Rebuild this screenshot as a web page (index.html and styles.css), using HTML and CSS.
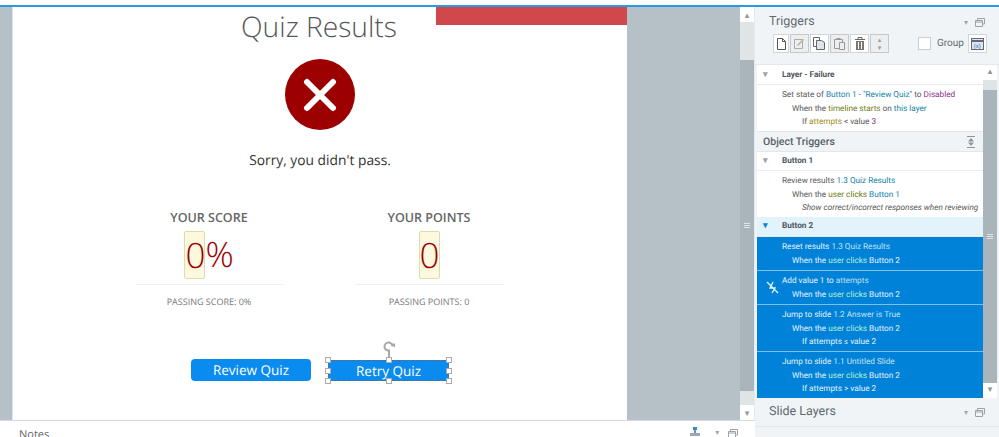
FILE: index.html
```html
<!DOCTYPE html>
<html lang="en">
<head>
  <meta charset="UTF-8">
  <title>Quiz Results</title>
  <link rel="stylesheet" href="styles.css">
</head>
<body>
  <div class="topline"></div>
  <div class="app">
    <div class="left">
      <div class="stage">
        <div class="slide">
          <div class="red-bar"></div>
          <h1 class="title">Quiz Results</h1>
          <div class="fail-icon">
            <svg width="34" height="34" viewBox="0 0 34 34"><path d="M4 4L30 30M30 4L4 30" stroke="#fff" stroke-width="6" stroke-linecap="round"/></svg>
          </div>
          <p class="sorry">Sorry, you didn't pass.</p>
          <div class="scores">
            <div class="score">
              <div class="score-label">YOUR SCORE</div>
              <div class="score-value"><span class="var">0</span>%</div>
              <div class="score-pass">PASSING SCORE: 0%</div>
            </div>
            <div class="score">
              <div class="score-label">YOUR POINTS</div>
              <div class="score-value"><span class="var">0</span></div>
              <div class="score-pass">PASSING POINTS: 0</div>
            </div>
          </div>
          <div class="buttons">
            <div class="btn">Review Quiz</div>
            <div class="btn selected">Retry Quiz
              <svg class="rotate" width="14" height="18" viewBox="0 0 14 18"><path d="M10.5 6.5A4 4 0 1 0 7 10.5V18" fill="none" stroke="#a9a9a9" stroke-width="2"/><path d="M8 3.5h5v4z" fill="#a9a9a9"/></svg>
              <i class="handle tl"></i><i class="handle tc"></i><i class="handle tr"></i>
              <i class="handle ml"></i><i class="handle mr"></i>
              <i class="handle bl"></i><i class="handle bc"></i><i class="handle br"></i>
            </div>
          </div>
        </div>
        <div class="gutter"></div>
        <div class="vscroll outer">
          <div class="arrow">&#9652;</div>
          <div class="track"></div>
          <div class="thumb"><span class="grip"></span></div>
          <div class="track short"></div>
          <div class="arrow">&#9662;</div>
        </div>
      </div>
      <div class="notes">
        <span class="notes-title">Notes</span>
        <svg class="notes-pin" width="12" height="10" viewBox="0 0 12 10"><rect x="4" y="0" width="4" height="3" fill="#2b8fd8"/><rect x="5" y="3" width="2" height="3" fill="#7f93a3"/><rect x="1" y="6" width="10" height="3" fill="#9aa9b5"/></svg>
        <span class="caret">&#9662;</span>
        <svg class="win-icon" width="10" height="8" viewBox="0 0 10 8"><path d="M2.5 2V.5h7V6H8M.5 2.500h7v6h-7zM.5 4h7" fill="none" stroke="#9aa3aa"/></svg>
      </div>
    </div>

    <div class="panel">
      <div class="panel-head">
        <div class="panel-title-row">
          <span class="panel-title">Triggers</span>
          <span class="caret">&#9662;</span>
          <svg class="win-icon" width="10" height="9" viewBox="0 0 10 9"><path d="M2.5 2V.5h7V6H8M.5 2.5h7v6h-7zM.5 4h7" fill="none" stroke="#9aa3aa"/></svg>
        </div>
        <div class="toolbar">
          <div class="tool first"><svg width="9" height="12" viewBox="0 0 9 12"><path d="M.5.5h5l3 3v8h-8zM5.500.5v3h3" fill="none" stroke="#555"/></svg></div>
          <div class="tool off"><svg width="13" height="13" viewBox="0 0 13 13"><path d="M1.500 2.500h8v9h-8z" fill="none" stroke="#aaa"/><path d="M4 8L10 2l1 1-6 6z" fill="#b5b09a"/></svg></div>
          <div class="tool"><svg width="13" height="13" viewBox="0 0 13 13"><path d="M.5.5h6v9h-6z" fill="#fff" stroke="#666"/><path d="M3.500 3.500h5l3 2v7h-8z" fill="#dfe5ea" stroke="#666"/></svg></div>
          <div class="tool off"><svg width="13" height="13" viewBox="0 0 13 13"><path d="M1.500 2.500h8v9h-8z" fill="none" stroke="#999"/><path d="M6.500 5.500h5v7h-5z" fill="#eee" stroke="#999"/><path d="M3.500 1h4v2h-4z" fill="#999"/></svg></div>
          <div class="tool"><svg width="12" height="13" viewBox="0 0 12 13"><path d="M1 2.500h10M4 2V.5h4V2" fill="none" stroke="#666"/><path d="M2 4h8v9H2z" fill="#777"/><path d="M4.500 5v7M7.500 5v7" stroke="#fff"/></svg></div>
          <div class="tool off stepper"><span>&#9652;</span><span>&#9662;</span></div>
          <label class="group"><span class="check"></span>Group</label>
          <div class="tool var-tool"><svg width="13" height="12" viewBox="0 0 13 12"><rect x=".5" y=".5" width="12" height="11" fill="#dde7f2" stroke="#667"/><path d="M.5 3h12" stroke="#667" stroke-width="2"/><text x="2.800" y="10" font-size="6" fill="#2b6fb0" font-family="Liberation Sans">{x}</text></svg></div>
        </div>
      </div>

      <div class="list-wrap">
        <div class="list">
          <div class="group-row"><span class="tri">&#9662;</span>Layer - Failure</div>
          <div class="item plain">
            <div class="l1">Set state of <b class="obj">Button 1 - "Review Quiz"</b> to <b class="state">Disabled</b></div>
            <div class="l2">When the <b class="ev">timeline starts</b> on <b class="obj">this layer</b></div>
            <div class="l3">If <b class="vr">attempts</b> &lt; value <b class="state">3</b></div>
          </div>
          <div class="section"><span>Object Triggers</span><svg width="8" height="12" viewBox="0 0 8 12"><path d="M0 .5h8M0 11.500h8" stroke="#8a949b"/><path d="M4 2l3 3.500H1zM4 10L1 6.500h6z" fill="#8a949b"/></svg></div>
          <div class="group-row"><span class="tri">&#9662;</span>Button 1</div>
          <div class="item plain last">
            <div class="l1">Review results <b class="obj">1.3 Quiz Results</b></div>
            <div class="l2">When the <b class="ev">user clicks</b> <b class="obj">Button 1</b></div>
            <div class="l3 note">Show correct/incorrect responses when reviewing</div>
          </div>
          <div class="group-row active"><span class="tri">&#9662;</span>Button 2</div>
          <div class="item sel">
            <div class="l1">Reset results <b class="dim">1.3 Quiz Results</b></div>
            <div class="l2">When the <b class="ev">user clicks</b> Button 2</div>
          </div>
          <div class="item sel">
            <svg class="fx" width="13" height="13" viewBox="0 0 13 13"><path d="M1 1l11 11M7 1L4 7h5l-3 5" fill="none" stroke="#e6f3fc" stroke-width="1.300"/></svg>
            <div class="l1">Add value 1 to <b class="dim">attempts</b></div>
            <div class="l2">When the <b class="ev">user clicks</b> Button 2</div>
          </div>
          <div class="item sel">
            <div class="l1">Jump to slide <b class="dim">1.2 Answer is True</b></div>
            <div class="l2">When the <b class="ev">user clicks</b> Button 2</div>
            <div class="l3">If attempts &le; value 2</div>
          </div>
          <div class="item sel">
            <div class="l1">Jump to slide <b class="dim">1.1 Untitled Slide</b></div>
            <div class="l2">When the <b class="ev">user clicks</b> Button 2</div>
            <div class="l3">If attempts &gt; value 2</div>
          </div>
        </div>
        <div class="vscroll inner">
          <div class="arrow">&#9652;</div>
          <div class="track"></div>
          <div class="thumb"><span class="grip"></span></div>
          <div class="arrow">&#9662;</div>
        </div>
      </div>

      <div class="panel-foot">
        <span class="panel-title">Slide Layers</span>
        <span class="caret">&#9662;</span>
        <svg class="win-icon" width="10" height="9" viewBox="0 0 10 9"><path d="M2.5 2V.5h7V6H8M.5 2.5h7v6h-7zM.5 4h7" fill="none" stroke="#9aa3aa"/></svg>
      </div>
    </div>
  </div>
</body>
</html>
```

FILE: styles.css
```css
* {
  box-sizing: border-box;
}

html, body {
  height: 100%;
}

body {
  margin: 0;
  background: #fff;
  font-family: 'Open Sans', sans-serif;
  color: #555;
  overflow: hidden;
  text-rendering: geometricPrecision;
}

.topline {
  height: 7px;
  background: #fff;
  border-bottom: 2px solid #2b9ae0;
}

.app {
  display: flex;
  height: 430px;
}

/* left side: slide stage and notes */
.left {
  width: 755px;
  display: flex;
  flex-direction: column;
}

.stage {
  flex: 1;
  display: flex;
  min-height: 0;
  background: #b5c0c7;
  padding-left: 12px;
  border-right: 1px solid #e6eaed;
}

.slide {
  width: 615px;
  position: relative;
  background: #fff;
  border-left: 1px solid #d3e6f5;
  display: flex;
  flex-direction: column;
  align-items: center;
}

.gutter {
  width: 113px;
}

.red-bar {
  position: absolute;
  top: 0;
  right: 0;
  width: 191px;
  height: 18px;
  background: #cf494c;
}

.title {
  margin: 0 2px 0 0;
  font-size: 28.2px;
  line-height: 40px;
  font-weight: 300;
  color: #555759;
}

.fail-icon {
  width: 70px;
  height: 71px;
  margin-top: 12px;
  border-radius: 50%;
  background: #9c0000;
  display: flex;
  align-items: center;
  justify-content: center;
}

.sorry {
  margin: 21px 0 0;
  font-size: 13.8px;
  line-height: 20px;
  color: #333;
}

.scores {
  display: grid;
  grid-template-columns: 149px 149px;
  gap: 71px;
  margin: 39px 2px 0 0;
}

.score {
  text-align: center;
}

.score-label {
  font-size: 12.5px;
  line-height: 16px;
  font-weight: 600;
  color: #666;
}

.score-value {
  height: 54px;
  margin-top: 5px;
  padding-bottom: 6px;
  border-bottom: 1px solid #f1f1f1;
  font-size: 35px;
  line-height: 47px;
  font-weight: 300;
  color: #a00000;
}

.var {
  display: inline-block;
  height: 48px;
  width: 21px;
  background: #fdf9de;
  border: 1px solid #dcdcae;
  border-radius: 2px;
  vertical-align: top;
  text-align: center;
}

.score-pass {
  margin-top: 10px;
  font-size: 9px;
  line-height: 14px;
  color: #777;
}

.buttons {
  display: flex;
  gap: 17px;
  margin-top: 50px;
}

.btn {
  position: relative;
  width: 120px;
  height: 22px;
  border-radius: 4px;
  background: #0a8bf0;
  color: #fff;
  font-size: 13.5px;
  line-height: 22px;
  text-align: center;
}

.btn.selected {
  width: 121px;
  height: 21px;
  margin-top: 1px;
  border-radius: 0;
  outline: 1px dashed #5e6d78;
  outline-offset: -1px;
}

.handle {
  position: absolute;
  width: 6px;
  height: 6px;
  background: #fff;
  border: 1.5px solid #aaa;
}

.tl { top: -3px; left: -3px; }
.tc { top: -3px; left: 58px; }
.tr { top: -3px; right: -3px; }
.ml { top: 8px; left: -3px; }
.mr { top: 8px; right: -3px; }
.bl { bottom: -3px; left: -3px; }
.bc { bottom: -3px; left: 58px; }
.br { bottom: -3px; right: -3px; }

.rotate {
  position: absolute;
  top: -20px;
  left: 54px;
}

/* scrollbars */
.vscroll {
  width: 14px;
  display: flex;
  flex-direction: column;
  background: #dfe4e7;
}

.arrow {
  height: 15px;
  background: #fff;
  color: #8c979e;
  font-size: 9px;
  line-height: 15px;
  text-align: center;
}

.track {
  height: 38px;
}

.track.short {
  height: 14px;
}

.thumb {
  flex: 1;
  background: #a9b4bb;
  display: flex;
  align-items: center;
  justify-content: center;
}

.grip {
  width: 6px;
  height: 5px;
  border-top: 1px solid #dfe4e7;
  border-bottom: 1px solid #dfe4e7;
  background: linear-gradient(#a9b4bb 1px, #dfe4e7 1px, #dfe4e7 2px, #a9b4bb 2px);
}

.notes {
  height: 17px;
  flex: none;
  display: flex;
  align-items: flex-start;
  border-top: 1px solid #d6d6e6;
  background: #fff;
  overflow: hidden;
}

.notes-title {
  margin: 6px 0 0 19px;
  font-size: 11px;
  line-height: 15px;
  color: #666;
}

.notes-pin {
  margin: 6px 0 0 640px;
}

.notes .caret {
  margin: 7px 0 0 14px;
}

.notes .win-icon {
  margin: 8px 0 0 9px;
}

.caret {
  font-size: 8px;
  line-height: 9px;
  color: #a0a8ae;
}

/* right side panel */
.panel {
  width: 244px;
  display: flex;
  flex-direction: column;
  background: #f1f4f7;
  font-family: 'Roboto', sans-serif;
}

.panel-head {
  height: 58px;
  padding: 8px 12px 0 14px;
  border-bottom: 1px solid #e3e7ea;
}

.panel-title-row,
.panel-foot {
  display: flex;
  align-items: center;
}

.panel-title {
  flex: 1;
  font-size: 12.5px;
  line-height: 14px;
  color: #606a70;
}

.panel-title-row .caret,
.panel-foot .caret {
  margin-right: 7px;
}

.panel-title-row .win-icon {
  margin-right: 2px;
}

.toolbar {
  display: flex;
  margin-top: 5px;
  padding-left: 4px;
}

.tool {
  width: 19px;
  height: 19px;
  margin-right: 1px;
  flex: none;
  display: flex;
  align-items: center;
  justify-content: center;
  background: #fff;
  border: 1px solid #cfd5d9;
}

.tool.first {
  width: 16px;
}

.tool.off {
  background: #eceeef;
  border-color: #c4c9cc;
}

.stepper {
  flex-direction: column;
  color: #9aa1a6;
  font-size: 7px;
  line-height: 8px;
}

.group {
  display: flex;
  align-items: center;
  margin-left: auto;
  width: 50px;
  font-size: 10px;
  color: #606a70;
}

.check {
  width: 13px;
  height: 13px;
  margin-right: 6px;
  background: #fff;
  border: 1px solid #c9ced2;
}

.var-tool {
  margin-right: 0;
}

.list-wrap {
  flex: 1;
  min-height: 0;
  display: flex;
  padding-left: 2px;
}

.list {
  width: 226px;
  background: #fff;
  font-size: 8.2px;
  line-height: 13px;
  color: #555;
}

.list-wrap .vscroll {
  width: 14px;
}

.vscroll.inner {
  background: #dfe4e7;
}

.vscroll.inner .track {
  height: 10px;
}

.group-row {
  height: 19px;
  padding-left: 25px;
  position: relative;
  font-weight: 700;
  line-height: 19px;
  color: #4f565b;
  border-bottom: 1px solid #e8ecef;
}

.list > .group-row:first-child {
  height: 20px;
  line-height: 21px;
}

.group-row.active {
  height: 20px;
  background: #e2f3fb;
}

.tri {
  position: absolute;
  left: 6px;
  top: 0;
  font-size: 9px;
  color: #9aa3a9;
}

.group-row.active .tri {
  color: #0a82da;
}

.section {
  height: 21px;
  padding: 0 8px 0 6px;
  display: flex;
  align-items: center;
  justify-content: space-between;
  background: #f1f4f7;
  border-top: 1px solid #e3e7ea;
  border-bottom: 1px solid #e3e7ea;
  font-size: 10.5px;
  font-weight: 500;
  color: #566066;
}

.item {
  position: relative;
  padding: 4px 0 2px 25px;
}

.item b {
  font-weight: 400;
}

.l1 {
  margin-bottom: 1px;
}

.l2 {
  padding-left: 10px;
}

.l3 {
  padding-left: 20px;
}

.note {
  padding-left: 20px;
  font-style: italic;
  white-space: nowrap;
}

.obj {
  color: #0f80a8;
}

.state {
  color: #8a2f8a;
}

.ev {
  color: #6b7a10;
}

.vr {
  color: #a08a10;
}

.item.sel {
  background: #0082d9;
  color: #e8f4fc;
  border-bottom: 1px solid #7cc0ec;
}

.item.sel:last-child {
  border-bottom: none;
}

.item.sel .ev {
  color: #b8f0d0;
}

.item.sel .dim {
  color: #c4e2f6;
}

.fx {
  position: absolute;
  left: 9px;
  top: 10px;
}

.panel-foot {
  height: 29px;
  flex: none;
  padding: 0 12px 0 14px;
  border-bottom: 1px solid #e3e7ea;
  margin-bottom: 10px;
}

.panel-foot .win-icon {
  margin-right: 2px;
}
```
